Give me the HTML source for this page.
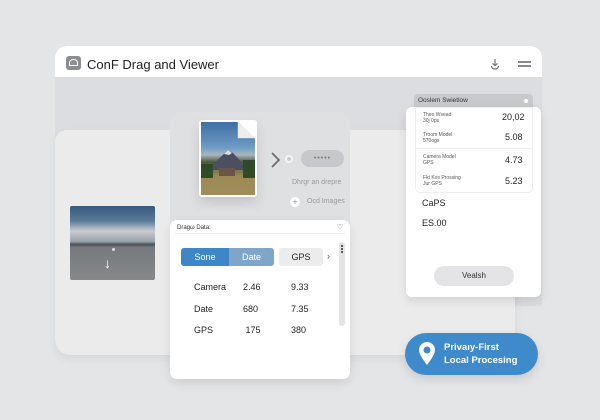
<!DOCTYPE html>
<html><head><style>
*{margin:0;padding:0;box-sizing:border-box}
body{width:600px;height:420px;background:#e4e5e7;font-family:"Liberation Sans",sans-serif;position:relative;overflow:hidden;color:#222}
.abs{position:absolute}
</style></head><body>
<!-- window -->
<div class="abs" style="left:55px;top:46px;width:487px;height:260px;background:#dcdde0;border-radius:12px 12px 0 0"></div>
<div class="abs" style="left:55px;top:46px;width:487px;height:31px;background:#fff;border-radius:12px 12px 0 0"></div>
<div class="abs" style="left:66px;top:56px;width:15px;height:14px;background:#8c8d90;border-radius:3px"></div>
<div class="abs" style="left:69px;top:59px;width:9px;height:7px;border:1.5px solid #fff;border-top-left-radius:4px;border-top-right-radius:4px"></div>
<div class="abs" style="left:87px;top:57px;font-size:13px;color:#222">ConF Drag and Viewer</div>
<svg class="abs" style="left:489px;top:58px" width="12" height="12"><path d="M6 1v6M3.5 5.5L6 7.5 8.5 5.5M2.5 8a3.5 3 0 0 0 7 0" stroke="#777" stroke-width="1.2" fill="none"/></svg>
<div class="abs" style="left:518px;top:61px;width:13px;height:2px;background:#888"></div>
<div class="abs" style="left:518px;top:65px;width:13px;height:2px;background:#888"></div>
<!-- left panel -->
<div class="abs" style="left:55px;top:130px;width:460px;height:225px;background:#ebebec;border-radius:12px 0 0 16px;box-shadow:0 4px 10px rgba(0,0,0,.06)"></div>
<div class="abs" style="left:70px;top:206px;width:85px;height:74px;background:linear-gradient(#36597e 0%,#5b7a98 20%,#c8ccd0 34%,#9aa2aa 48%,#4a5058 52%,#777a7d 56%,#86888a 100%);border-radius:2px"></div>
<div class="abs" style="left:112px;top:248px;width:3px;height:3px;background:#ddd;border-radius:50%"></div>
<div class="abs" style="left:104px;top:256px;color:#fff;font-size:14px;line-height:14px">↓</div>
<!-- center back card -->
<div class="abs" style="left:170px;top:112px;width:180px;height:140px;background:#dfe0e2;border-radius:12px"></div>
<div class="abs" style="left:199px;top:120px;width:58px;height:77px;background:#fff;border-radius:3px;box-shadow:0 6px 12px rgba(0,0,0,.12)"></div>
<div class="abs" style="left:201px;top:122px;width:54px;height:73px;background:linear-gradient(#3d6fa3 0%,#6f9bc6 35%,#aab6c0 45%,#4a5a3c 55%,#6b6a40 62%,#9c8a55 75%,#a08d5c 100%);clip-path:polygon(0 0,68% 0,100% 22%,100% 100%,0 100%)"></div>
<svg class="abs" style="left:201px;top:122px" width="54" height="73"><polygon points="6,48 27,28 32,31 48,48" fill="#4a5060"/><polygon points="23,32 27,28 31,31 28,33" fill="#ddd"/><polygon points="37,0 54,0 54,16" fill="#fff"/><path d="M37 0v16h17" fill="#eee" stroke="#ddd" stroke-width=".5"/><rect x="0" y="42" width="12" height="14" fill="#2f4a26"/><rect x="42" y="38" width="12" height="18" fill="#2f4a26"/><rect x="18" y="46" width="16" height="8" fill="#6a5548"/></svg>
<svg class="abs" style="left:270px;top:151px" width="12" height="18"><path d="M2 2l7 7-7 7" stroke="#666" stroke-width="1.6" fill="none"/></svg>
<div class="abs" style="left:285px;top:155px;width:8px;height:8px;border:2px solid #f5f5f5;border-radius:50%;background:#ccc"></div>
<div class="abs" style="left:301px;top:150px;width:43px;height:17px;background:#c7c8cb;border-radius:9px;color:#777;font-size:7px;text-align:center;line-height:17px;letter-spacing:1px">•••••</div>
<div class="abs" style="left:292px;top:179px;font-size:7px;color:#999">Dhrgr an drepre</div>
<div class="abs" style="left:290px;top:197px;width:10px;height:10px;border-radius:50%;background:#fff;color:#999;font-size:9px;line-height:10px;text-align:center">+</div>
<div class="abs" style="left:307px;top:198px;font-size:7px;color:#999">Ocd Images</div>
<!-- data card -->
<div class="abs" style="left:170px;top:220px;width:180px;height:159px;background:#fff;border-radius:7px;box-shadow:0 4px 10px rgba(0,0,0,.1)"></div>
<div class="abs" style="left:177px;top:225px;font-size:6px;color:#333">Dragω Data:</div>
<div class="abs" style="left:337px;top:223px;font-size:7px;color:#555">♡</div>
<div class="abs" style="left:175px;top:233px;width:170px;height:1px;background:#eee"></div>
<div class="abs" style="left:339px;top:242px;width:6px;height:84px;background:#e4e4e4;border-radius:3px"></div>
<div class="abs" style="left:341px;top:245px;width:2px;height:8px;border-left:2px dotted #555"></div>
<div class="abs" style="left:181px;top:248px;width:48px;height:18px;background:#3d86c8;border-radius:3px 0 0 3px;color:#fff;font-size:9px;line-height:18px;text-align:center">Sone</div>
<div class="abs" style="left:229px;top:248px;width:45px;height:18px;background:#7fa5c8;border-radius:0 3px 3px 0;color:#fff;font-size:9px;line-height:18px;text-align:center">Date</div>
<div class="abs" style="left:279px;top:248px;width:44px;height:18px;background:#ececed;border-radius:3px;color:#222;font-size:9px;line-height:18px;text-align:center">GPS</div>
<div class="abs" style="left:327px;top:251px;font-size:9px;color:#555">›</div>
<div class="abs" style="left:194px;top:277px;font-size:9px;line-height:21.5px">Camera<br>Date<br>GPS</div>
<div class="abs" style="left:243px;top:277px;font-size:9px;line-height:21.5px">2.46<br>680<br>&nbsp;175</div>
<div class="abs" style="left:291px;top:277px;font-size:9px;line-height:21.5px">9.33<br>7.35<br>380</div>
<!-- right card -->
<div class="abs" style="left:414px;top:94px;width:119px;height:16px;background:#c8c9cc;border-radius:4px 4px 0 0"></div>
<div class="abs" style="left:418px;top:97px;font-size:6.5px;color:#333">Ooslem Swietlow</div>
<div class="abs" style="left:524px;top:99px;width:4px;height:4px;background:#fff;border-radius:50%"></div>
<div class="abs" style="left:406px;top:107px;width:135px;height:190px;background:#fff;border-radius:6px;box-shadow:0 4px 10px rgba(0,0,0,.1)"></div>
<div class="abs" style="left:415px;top:107px;width:118px;height:86px;border:1px solid #eee;border-radius:0 0 5px 5px"></div>
<div class="abs" style="left:423px;top:112px;font-size:5px;color:#555;line-height:6px">Theo Wsead<br>30j 0ps</div>
<div class="abs" style="left:502px;top:112px;font-size:9px">20,02</div>
<div class="abs" style="left:423px;top:132px;font-size:5px;color:#555;line-height:6px">Troom Model<br>570ogs</div>
<div class="abs" style="left:505px;top:132px;font-size:9px">5.08</div>
<div class="abs" style="left:416px;top:148px;width:116px;height:1px;background:#f0f0f0"></div>
<div class="abs" style="left:423px;top:154px;font-size:5px;color:#555;line-height:6px">Camera Model<br>GPS</div>
<div class="abs" style="left:505px;top:155px;font-size:9px">4.73</div>
<div class="abs" style="left:423px;top:175px;font-size:5px;color:#555;line-height:6px">Fkt Kos Prossing<br>Jur GPS</div>
<div class="abs" style="left:505px;top:176px;font-size:9px">5.23</div>
<div class="abs" style="left:422px;top:198px;font-size:9px">CaPS</div>
<div class="abs" style="left:422px;top:218px;font-size:9px">ES.00</div>
<div class="abs" style="left:434px;top:266px;width:80px;height:20px;background:#e4e4e6;border-radius:10px;font-size:8px;text-align:center;line-height:20px;color:#333">Vealsh</div>
<!-- badge -->
<div class="abs" style="left:405px;top:333px;width:133px;height:42px;background:#3f8acb;border-radius:21px;box-shadow:0 4px 10px rgba(0,0,0,.12)"></div>
<svg class="abs" style="left:418px;top:342px" width="18" height="24"><path d="M9 23C3 15 1 11 1 8a8 8 0 0 1 16 0c0 3-2 7-8 15z" fill="#fff"/><circle cx="9" cy="8" r="3.5" fill="#3f8acb"/></svg>
<div class="abs" style="left:444px;top:341px;font-size:9.5px;font-weight:bold;color:#fff;line-height:13px">Privaıy-First<br>Local Procesing</div>
</body></html>
